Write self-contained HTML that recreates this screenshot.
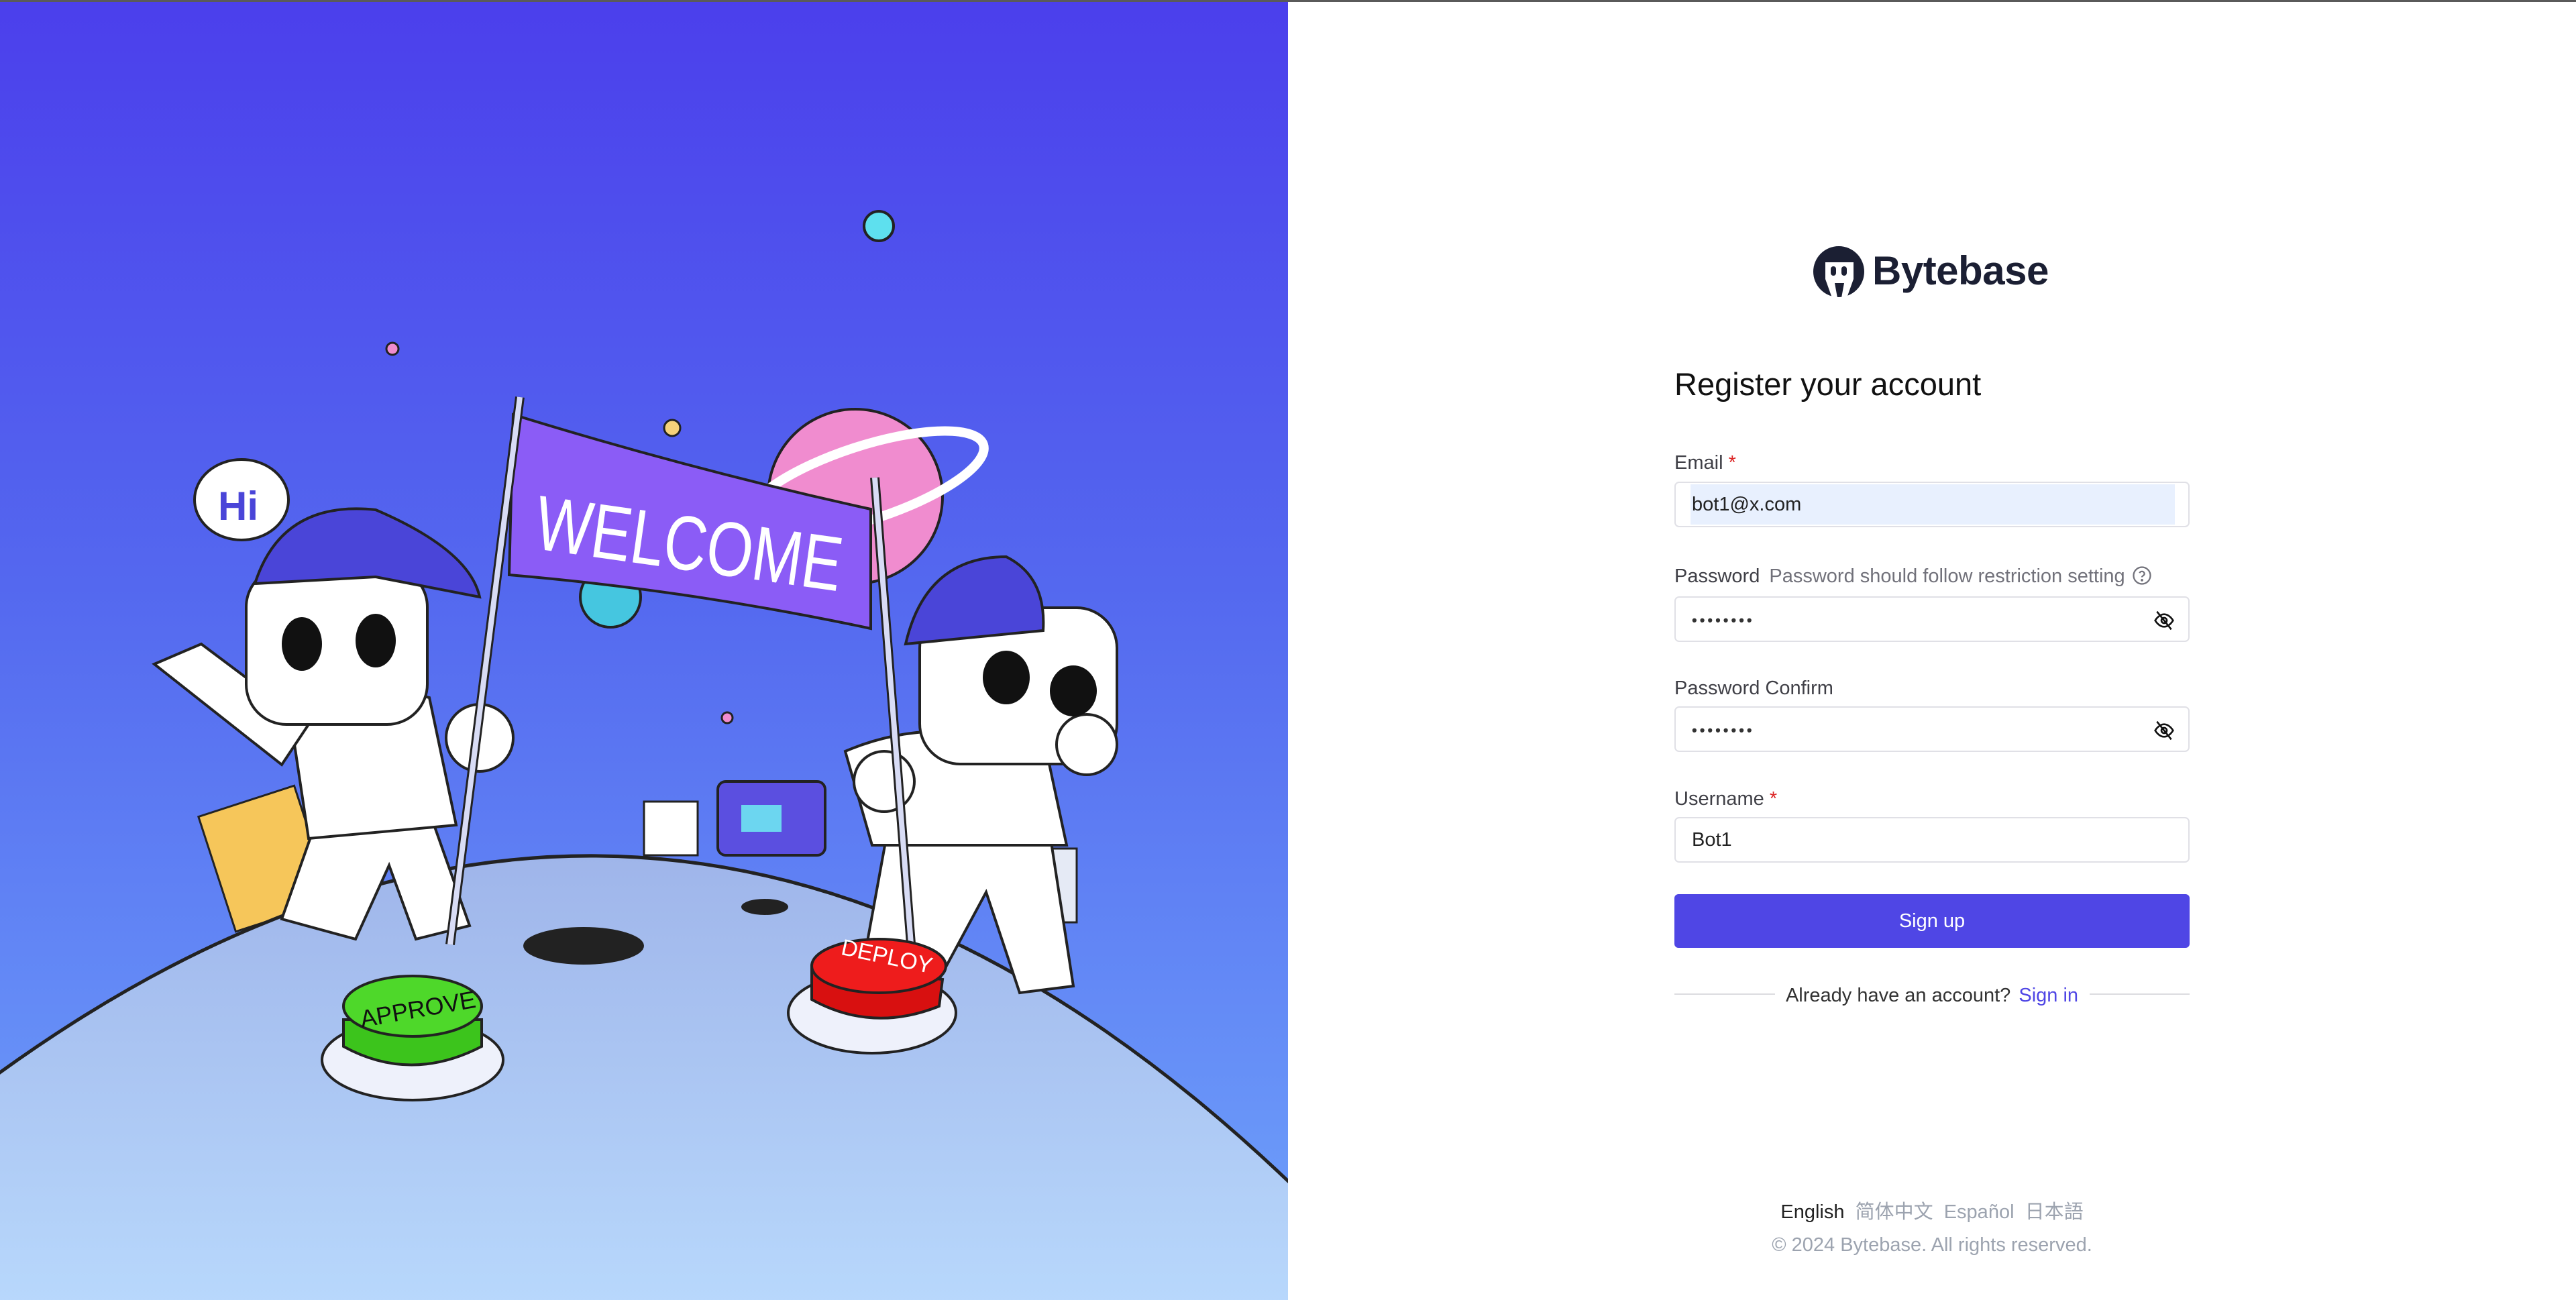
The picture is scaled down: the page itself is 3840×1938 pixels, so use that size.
<!DOCTYPE html>
<html><head><meta charset="utf-8"><style>
*{margin:0;padding:0;box-sizing:border-box}
body{width:3840px;height:1938px;position:relative;background:#fff;font-family:"Liberation Sans","Noto Sans CJK SC",sans-serif;overflow:hidden}
.a{position:absolute}
.lbl{position:absolute;left:2496px;font-size:29px;color:#3f3f46;font-weight:500;line-height:34px}
.req{color:#dc2626}
.inp{position:absolute;left:2496px;width:768px;height:68px;border:2px solid #e0e0e6;border-radius:7px;background:#fff;font-size:29px;color:#222;padding-left:24px;line-height:64px}
.dots{letter-spacing:4px;font-size:22px;color:#333;font-weight:bold}
.eye{position:absolute;right:20px;top:18px}
</style></head><body>
<div class="a" style="left:0;top:0;width:3840px;height:3px;background:#5a5a5a"></div>
<svg class="a" style="left:0;top:3px" width="1920" height="1935" viewBox="0 3 1920 1935">
<defs>
<linearGradient id="sky" x1="0" y1="0" x2="0" y2="1"><stop offset="0" stop-color="#4b3fec"/><stop offset="0.45" stop-color="#5468ef"/><stop offset="1" stop-color="#6fa3fb"/></linearGradient>
<linearGradient id="moon" x1="0" y1="0" x2="0" y2="1"><stop offset="0" stop-color="#9fb5ea"/><stop offset="1" stop-color="#b8d8fc"/></linearGradient>
</defs>
<rect x="0" y="0" width="1920" height="1938" fill="url(#sky)"/>
<circle cx="1310" cy="337" r="22" fill="#5ee0ee" stroke="#222" stroke-width="4"/>
<circle cx="585" cy="520" r="9" fill="#f08ccf" stroke="#222" stroke-width="3"/>
<circle cx="1002" cy="638" r="12" fill="#f6d27a" stroke="#222" stroke-width="3"/>
<circle cx="1084" cy="1070" r="8" fill="#f08ccf" stroke="#222" stroke-width="3"/>
<circle cx="910" cy="890" r="45" fill="#45c6e0" stroke="#222" stroke-width="4"/>
<circle cx="1275" cy="740" r="130" fill="#f08ccf" stroke="#222" stroke-width="4"/>
<ellipse cx="1290" cy="720" rx="185" ry="55" transform="rotate(-18 1290 720)" fill="none" stroke="#fff" stroke-width="14"/>
<path d="M765,618 Q1030,700 1298,759 L1298,937 Q1030,880 759,857 Z" fill="#8b5cf6" stroke="#222" stroke-width="4"/>
<text x="800" y="850" font-family="Liberation Sans" font-size="115" fill="#fff" transform="rotate(8 1030 790)" textLength="460" lengthAdjust="spacingAndGlyphs">WELCOME</text>
<rect x="320" y="1190" width="150" height="180" fill="#f6c65a" stroke="#222" stroke-width="3" transform="rotate(-18 395 1280)"/>
<rect x="960" y="1195" width="80" height="80" fill="#fff" stroke="#222" stroke-width="3"/>
<rect x="1070" y="1165" width="160" height="110" rx="12" fill="#5b4fe0" stroke="#222" stroke-width="4"/>
<rect x="1105" y="1200" width="60" height="40" fill="#6cd6f0"/>
<rect x="1520" y="1265" width="85" height="110" fill="#e5eaf5" stroke="#222" stroke-width="3"/>
<path d="M-10,1606 Q1000,870 1935,1775 L1935,1950 L-10,1950 Z" fill="url(#moon)" stroke="#222" stroke-width="5"/>
<ellipse cx="870" cy="1410" rx="90" ry="28" fill="#222"/>
<ellipse cx="1140" cy="1352" rx="35" ry="12" fill="#222"/>
<g stroke="#222" stroke-width="4" fill="#fff">
<path d="M420,1370 L480,1200 L640,1210 L700,1380 L620,1400 L580,1290 L530,1400 Z"/>
<path d="M430,1050 Q520,1010 640,1040 L680,1230 L460,1250 Z"/>
<path d="M230,990 L300,960 L460,1080 L420,1140 Z"/>
<rect x="367" y="845" width="270" height="235" rx="60"/>
<circle cx="715" cy="1100" r="50"/>
</g>
<path d="M380,870 Q420,745 560,760 Q700,820 715,890 L560,860 Z" fill="#4a45d8" stroke="#222" stroke-width="4"/>
<ellipse cx="450" cy="960" rx="30" ry="40" fill="#111"/>
<ellipse cx="560" cy="955" rx="30" ry="40" fill="#111"/>
<ellipse cx="360" cy="745" rx="70" ry="60" fill="#fff" stroke="#222" stroke-width="4"/>
<text x="325" y="775" font-family="Liberation Sans" font-weight="bold" font-size="60" fill="#4a45d8">Hi</text>
<g stroke="#222" stroke-width="4" fill="#fff">
<path d="M1290,1420 L1330,1200 L1560,1210 L1600,1470 L1520,1480 L1470,1330 L1400,1460 Z"/>
<path d="M1260,1120 Q1400,1060 1560,1120 L1590,1260 L1300,1260 Z"/>
<rect x="1371" y="906" width="294" height="233" rx="60"/>
<circle cx="1620" cy="1110" r="45"/>
<circle cx="1318" cy="1165" r="45"/>
</g>
<path d="M1350,960 Q1380,830 1500,830 Q1560,860 1555,940 Z" fill="#4a45d8" stroke="#222" stroke-width="4"/>
<ellipse cx="1500" cy="1010" rx="35" ry="40" fill="#111"/>
<ellipse cx="1600" cy="1030" rx="35" ry="38" fill="#111"/>
<line x1="775" y1="592" x2="671" y2="1408" stroke="#222" stroke-width="14"/>
<line x1="775" y1="592" x2="671" y2="1408" stroke="#d8dcf5" stroke-width="8"/>
<line x1="1304" y1="712" x2="1359" y2="1420" stroke="#222" stroke-width="14"/>
<line x1="1304" y1="712" x2="1359" y2="1420" stroke="#d8dcf5" stroke-width="8"/>
<ellipse cx="615" cy="1580" rx="135" ry="60" fill="#eef1fb" stroke="#222" stroke-width="4"/>
<path d="M512,1520 L512,1560 Q612,1615 718,1560 L718,1520 Z" fill="#3cc41c" stroke="#222" stroke-width="4"/>
<ellipse cx="615" cy="1500" rx="103" ry="45" fill="#4ed82a" stroke="#222" stroke-width="4"/>
<text x="535" y="1518" font-family="Liberation Sans" font-size="36" fill="#111" transform="rotate(-10 615 1500)">APPROVE</text>
<ellipse cx="1300" cy="1510" rx="125" ry="60" fill="#eef1fb" stroke="#222" stroke-width="4"/>
<path d="M1210,1440 L1210,1490 Q1300,1540 1400,1500 L1405,1460 Z" fill="#d81010" stroke="#222" stroke-width="4"/>
<ellipse cx="1310" cy="1440" rx="100" ry="40" fill="#ee1c1c" stroke="#222" stroke-width="4"/>
<text x="1250" y="1435" font-family="Liberation Sans" font-size="34" fill="#fff" transform="rotate(12 1310 1440)">DEPLOY</text>
</svg>

<svg class="a" style="left:2703px;top:366px" width="76" height="78" viewBox="0 0 76 78">
<circle cx="38" cy="39" r="38" fill="#1b1f33"/>
<path d="M18,25 H60 V50 L50,78 H42 L46,56 H32 L36,78 H28 L18,50 Z" fill="#fff"/>
<rect x="26" y="31" width="8" height="14" rx="4" fill="#1b1f33"/>
<rect x="42" y="31" width="8" height="14" rx="4" fill="#1b1f33"/>
</svg>
<div class="a" style="left:2791px;top:364px;font-size:60px;font-weight:bold;color:#1b1f33;letter-spacing:-0.5px;line-height:80px">Bytebase</div>

<div class="a" style="left:2496px;top:544px;font-size:47px;color:#111;font-weight:500;line-height:58px">Register your account</div>

<div class="lbl" style="top:673px">Email <span class="req">*</span></div>
<div class="inp" style="top:718px"><div class="a" style="left:22px;top:2px;width:722px;height:60px;background:#e8f0fe"></div><span style="position:relative">bot1@x.com</span></div>

<div class="lbl" style="top:842px">Password <span style="color:#71717a;font-weight:400;margin-left:6px">Password should follow restriction setting</span>
<svg style="vertical-align:-5px;margin-left:2px" width="30" height="30" viewBox="0 0 24 24" fill="none" stroke="#71717a" stroke-width="1.8"><circle cx="12" cy="12" r="10"/><path d="M9.1 9a3 3 0 0 1 5.8 1c0 2-3 2.5-3 4"/><circle cx="12" cy="17.5" r="0.6" fill="#71717a"/></svg></div>
<div class="inp" style="top:889px"><span class="dots">••••••••</span>
<svg class="eye" width="32" height="32" viewBox="0 0 24 24" fill="none" stroke="#111" stroke-width="2"><path d="M2 12s4-7 10-7 10 7 10 7-4 7-10 7S2 12 2 12z"/><circle cx="12" cy="12" r="3"/><line x1="4" y1="2" x2="20" y2="22"/></svg></div>

<div class="lbl" style="top:1009px">Password Confirm</div>
<div class="inp" style="top:1053px"><span class="dots">••••••••</span>
<svg class="eye" width="32" height="32" viewBox="0 0 24 24" fill="none" stroke="#111" stroke-width="2"><path d="M2 12s4-7 10-7 10 7 10 7-4 7-10 7S2 12 2 12z"/><circle cx="12" cy="12" r="3"/><line x1="4" y1="2" x2="20" y2="22"/></svg></div>

<div class="lbl" style="top:1174px">Username <span class="req">*</span></div>
<div class="inp" style="top:1218px">Bot1</div>

<div class="a" style="left:2496px;top:1333px;width:768px;height:80px;background:#4f46e5;border-radius:6px;color:#fff;font-size:29px;font-weight:500;text-align:center;line-height:80px">Sign up</div>

<div class="a" style="left:2496px;top:1481px;width:150px;height:2px;background:#dcdce0"></div>
<div class="a" style="left:3115px;top:1481px;width:149px;height:2px;background:#dcdce0"></div>
<div class="a" style="left:2496px;top:1467px;width:768px;text-align:center;font-size:29px;color:#333;line-height:34px">Already have an account? <span style="color:#4f46e5;margin-left:4px">Sign in</span></div>

<div class="a" style="left:2496px;top:1790px;width:768px;text-align:center;font-size:29px;color:#9ca3af;line-height:34px"><span style="color:#222">English</span>&nbsp; 简体中文&nbsp; Español&nbsp; 日本語</div>
<div class="a" style="left:2496px;top:1839px;width:768px;text-align:center;font-size:29px;color:#9ca3af;line-height:34px">© 2024 Bytebase. All rights reserved.</div>
</body></html>
